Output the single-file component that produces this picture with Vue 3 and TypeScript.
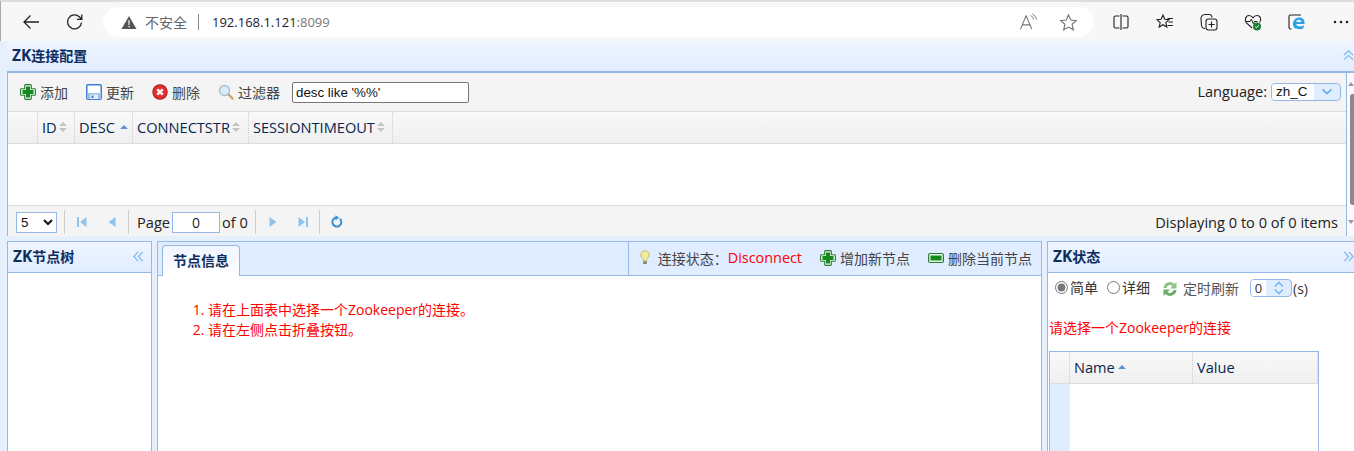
<script setup lang="ts">
const columns = [
  { label: 'ID', width: 37, active: false },
  { label: 'DESC', width: 58, active: true },
  { label: 'CONNECTSTR', width: 116, active: false },
  { label: 'SESSIONTIMEOUT', width: 144, active: false },
]
const tools = [
  { label: '添加', icon: 'add' },
  { label: '更新', icon: 'save' },
  { label: '删除', icon: 'del' },
  { label: '过滤器', icon: 'search' },
]
</script>

<template>
  <div class="page">
    <header class="chrome">
      <div class="nav">
        <svg class="navicon" viewBox="0 0 20 20"><path d="M18 10H3M9.500 3.500 3 10l6.500 6.500" fill="none" stroke="#222" stroke-width="1.300"/></svg>
        <svg class="navicon" viewBox="0 0 20 20"><path d="M16.500 10.500a7 7 0 1 1-2-5.500l2 2M16.800 2.500V7.300H12" fill="none" stroke="#222" stroke-width="1.300"/></svg>
      </div>
      <div class="address">
        <svg class="warn" viewBox="0 0 16 16"><path d="M8 1 16 15H0Z" fill="#555"/><path d="M7.300 5.500h1.400l-.2 5.200h-1zM7.300 11.700h1.400v1.400H7.300z" fill="#fff"/></svg>
        <span class="insecure">不安全</span>
        <span class="addr-sep"></span>
        <span class="host">192.168.1.121<span class="port">:8099</span></span>
        <span class="addr-spacer"></span>
        <svg class="addr-icon read" viewBox="0 0 20 20"><path d="M1.500 17 7.500 3l6 14M3.500 12.500h8" fill="none" stroke="#777" stroke-width="1.200"/><path d="M12 2.500c2 1 3 2.500 3.200 4.500M14 1c2.500 1.200 4 3.500 4.300 6" fill="none" stroke="#777" stroke-width="1"/></svg>
        <svg class="addr-icon star" viewBox="0 0 20 20"><path d="m10 2 2.400 5.400 5.800.6-4.400 3.900 1.300 5.800L10 14.800l-5.100 2.900 1.300-5.800L1.800 8l5.800-.6Z" fill="none" stroke="#777" stroke-width="1.200"/></svg>
      </div>
      <div class="browser-tools">
        <svg viewBox="0 0 18 18"><path d="M7.500 3H3.500A1.500 1.500 0 0 0 2 4.500v9A1.500 1.500 0 0 0 3.500 15h4M10.500 3h4A1.500 1.500 0 0 1 16 4.500v9a1.500 1.500 0 0 1-1.500 1.500h-4M9 1v16" fill="none" stroke="#222" stroke-width="1.100"/></svg>
        <svg viewBox="0 0 18 18"><path d="m7 2 1.800 4.300 4.200.4-3.200 2.900 1 4.400L7 11.700 3.200 14l1-4.400L1 6.700l4.200-.4Z" fill="none" stroke="#222" stroke-width="1.100"/><path d="M11.500 5.500H17M12.500 9H17M11.500 12.500H17" stroke="#222" stroke-width="1.100"/></svg>
        <svg viewBox="0 0 18 18"><rect x="6" y="6" width="11" height="11" rx="2.500" fill="none" stroke="#222" stroke-width="1.100"/><path d="M11.500 8.500v6M8.500 11.500h6" stroke="#222" stroke-width="1.100"/><path d="M5 15.500c-2 0-3.500-1.500-3.500-3.500L1 6a4 4 0 0 1 4-4.500h4a3 3 0 0 1 3 3" fill="none" stroke="#222" stroke-width="1.100"/></svg>
        <svg viewBox="0 0 18 18"><path d="M8 15 2.500 9.800C.2 7.300 1.500 2.500 5 2.500c1.800 0 3.200 1 4 2.300.8-1.300 2.200-2.300 4-2.300 3.500 0 4.800 4.300 2.700 7" fill="none" stroke="#222" stroke-width="1.100"/><path d="M1.500 8.500H6l1.300-2.300 2 4.500 1.200-2.200h3" fill="none" stroke="#222" stroke-width="1"/><circle cx="13" cy="13.500" r="4" fill="#1c7d32"/><path d="m11.200 13.500 1.300 1.300 2.200-2.500" fill="none" stroke="#fff" stroke-width="1"/></svg>
        <svg viewBox="0 0 18 18"><path d="M3.500 16H2.500A1.500 1.500 0 0 1 1 14.500v-11A1.500 1.500 0 0 1 2.500 2H13" fill="none" stroke="#222" stroke-width="1.100"/><path d="M5 11c0-4 3-6.500 6.500-6.500 3 0 5 2 5 5v1.500H8.200c.2 1.600 1.600 2.500 3.300 2.500 1.500 0 2.900-.4 4.200-1.200v2.600c-1.300.9-3 1.300-4.700 1.300C7.500 16.200 5 14.500 5 11Zm3.300-2h5c0-1.300-1-2.200-2.400-2.200-1.400 0-2.400.9-2.600 2.200Z" fill="#2aa3e6"/></svg>
        <svg viewBox="0 0 18 18"><circle cx="3" cy="9" r="1.300" fill="#222"/><circle cx="9" cy="9" r="1.300" fill="#222"/><circle cx="15" cy="9" r="1.300" fill="#222"/></svg>
      </div>
    </header>

    <main class="workspace">
      <section class="config">
        <div class="panel-title config-title">
          <span><span class="zk">ZK</span>连接配置</span>
          <svg class="chev" viewBox="0 0 12 12"><path d="M1 5.500 6 1l5 4.500M1 10.500 6 6l5 4.500" fill="none" stroke="#7ab8ee" stroke-width="1.300"/></svg>
        </div>
        <div class="config-body">
          <div class="config-main">
            <div class="toolbar">
              <div v-for="t in tools" :key="t.label" class="tool">
                <svg v-if="t.icon === 'add'" class="ico" viewBox="0 0 16 16"><path d="M5.500.6h5a.8.800 0 0 1 .8.800v3.300h3.300a.8.800 0 0 1 .8.800v5a.8.800 0 0 1-.8.800h-3.300v3.300a.8.800 0 0 1-.8.800h-5a.8.800 0 0 1-.8-.8v-3.300H1.400a.8.800 0 0 1-.8-.8v-5a.8.800 0 0 1 .8-.8h3.300V1.400a.8.800 0 0 1 .8-.8Z" fill="#eaf5e8" stroke="#2b7a36" stroke-width="1.100"/><path d="M6 2.500h4v3.500h3.500v4H10v3.500H6V10H2.500V6H6Z" fill="#128a1c"/></svg>
                <svg v-else-if="t.icon === 'save'" class="ico" viewBox="0 0 16 16"><rect x=".8" y=".8" width="14.400" height="14.400" rx="1" fill="#fff" stroke="#3f7fd6" stroke-width="1.500"/><path d="M1 9h14v6H1z" fill="#9dbfec"/><rect x="4" y="10.500" width="8" height="4.500" fill="#e6edf7"/><rect x="5.500" y="11.500" width="2" height="2.500" fill="#3f7fd6"/></svg>
                <svg v-else-if="t.icon === 'del'" class="ico" viewBox="0 0 16 16"><circle cx="8" cy="8" r="7.700" fill="#a81414"/><circle cx="8" cy="8" r="6.800" fill="#e43030"/><path d="m5.300 5.300 5.400 5.400M10.700 5.300l-5.400 5.400" stroke="#fff" stroke-width="2.400"/></svg>
                <svg v-else class="ico" viewBox="0 0 16 16"><path d="m10 10 4.500 4.500" stroke="#d0a060" stroke-width="2.400" stroke-linecap="round"/><circle cx="6.500" cy="6.500" r="5" fill="#d8ecfa" stroke="#a8bccb" stroke-width="1.300"/></svg>
                <span>{{ t.label }}</span>
              </div>
              <input class="filter" type="text" value="desc like '%%'" />
              <span class="spacer"></span>
              <span class="lang-label">Language:</span>
              <span class="lang-select">
                <span class="lang-value">zh_C</span>
                <span class="lang-arrow"><svg viewBox="0 0 12 8"><path d="m1.500 1.500 4.500 4 4.500-4" fill="none" stroke="#6fb4ea" stroke-width="1.800"/></svg></span>
              </span>
            </div>
            <div class="grid-head">
              <div class="row-cell"></div>
              <div v-for="c in columns" :key="c.label" class="col" :style="{ width: c.width + 'px' }">
                <span>{{ c.label }}</span>
                <span v-if="c.active" class="sort-up"></span>
                <span v-else class="sort-both"><i></i><b></b></span>
              </div>
            </div>
            <div class="grid-body"></div>
            <div class="pager">
              <select class="size"><option>5</option></select>
              <span class="psep first"></span>
              <svg class="pbtn" viewBox="0 0 16 16"><path d="M3 3h2v10H3zM12.500 3v10L6 8Z" fill="#8fc4ee"/></svg>
              <svg class="pbtn" viewBox="0 0 16 16"><path d="M11.500 3v10L4.500 8Z" fill="#8fc4ee"/></svg>
              <span class="psep"></span>
              <span class="ptext page-word">Page</span>
              <input class="page-input" type="text" value="0" />
              <span class="ptext">of 0</span>
              <span class="psep after-of"></span>
              <svg class="pbtn" viewBox="0 0 16 16"><path d="M4.500 3v10l7-5Z" fill="#8fc4ee"/></svg>
              <svg class="pbtn" viewBox="0 0 16 16"><path d="M11 3h2v10h-2zM3.500 3v10L10 8Z" fill="#8fc4ee"/></svg>
              <span class="psep"></span>
              <svg class="pbtn" viewBox="0 0 16 16"><path d="M11 4.800a4.500 4.500 0 1 1-3.500-1.300" fill="none" stroke="#3a8fd0" stroke-width="2"/><path d="M6.500 1.200v5l3.700-2.500Z" fill="#3a8fd0"/></svg>
              <span class="spacer"></span>
              <span class="ptext">Displaying 0 to 0 of 0 items</span>
            </div>
          </div>
          <div class="scrollbar">
            <span class="sb-up"></span>
            <span class="sb-thumb"></span>
            <span class="sb-down"></span>
          </div>
        </div>
      </section>

      <section class="lower">
        <aside class="west">
          <div class="panel-title side-title">
            <span><span class="zk">ZK</span>节点树</span>
            <svg class="chev" viewBox="0 0 12 12"><path d="M5.500 1 1 6l4.500 5M10.500 1 6 6l4.500 5" fill="none" stroke="#7ab8ee" stroke-width="1.300"/></svg>
          </div>
        </aside>
        <div class="center">
          <div class="tabs">
            <div class="tab">节点信息</div>
            <span class="spacer"></span>
            <div class="tab-tools">
              <svg class="bulb" viewBox="0 0 14 18"><path d="M7 1a5 5 0 0 0-3 9c.8.8 1 1.800 1 3h4c0-1.200.2-2.200 1-3A5 5 0 0 0 7 1Z" fill="#eeeb9a" stroke="#b9b56a"/><rect x="5" y="13.500" width="4" height="3" fill="#777"/></svg>
              <span class="status-label">连接状态：</span>
              <span class="status">Disconnect</span>
              <svg class="ico add-node" viewBox="0 0 16 16"><path d="M5.500.6h5a.8.800 0 0 1 .8.800v3.300h3.300a.8.800 0 0 1 .8.800v5a.8.800 0 0 1-.8.800h-3.300v3.300a.8.800 0 0 1-.8.800h-5a.8.800 0 0 1-.8-.8v-3.300H1.400a.8.800 0 0 1-.8-.8v-5a.8.800 0 0 1 .8-.8h3.300V1.400a.8.800 0 0 1 .8-.8Z" fill="#eaf5e8" stroke="#2b7a36" stroke-width="1.100"/><path d="M6 2.500h4v3.500h3.500v4H10v3.500H6V10H2.500V6H6Z" fill="#128a1c"/></svg>
              <span class="node-label">增加新节点</span>
              <svg class="ico del-node" viewBox="0 0 16 16"><rect x=".6" y="3.500" width="14.800" height="9" rx="1.500" fill="#eaf5e8" stroke="#2b7a36" stroke-width="1.200"/><rect x="2.500" y="5.500" width="11" height="5" fill="#128a1c"/></svg>
              <span class="node-label">删除当前节点</span>
            </div>
          </div>
          <ol class="hints">
            <li>请在上面表中选择一个Zookeeper的连接。</li>
            <li>请在左侧点击折叠按钮。</li>
          </ol>
        </div>
        <aside class="east">
          <div class="panel-title side-title">
            <span><span class="zk">ZK</span>状态</span>
            <svg class="chev" viewBox="0 0 12 12"><path d="M1.500 1 6 6l-4.500 5M6.500 1l4.500 5-4.500 5" fill="none" stroke="#7ab8ee" stroke-width="1.300"/></svg>
          </div>
          <div class="east-controls">
            <label class="radio"><input type="radio" name="mode" checked />简单</label>
            <label class="radio"><input type="radio" name="mode" />详细</label>
            <svg class="ico refresh" viewBox="0 0 16 16"><path d="M1.500 7a6.500 6.500 0 0 1 11-4L14.500 1v6.500h-6.500L10.500 5A3.700 3.700 0 0 0 4.500 7Z" fill="#8cc488"/><path d="M14.500 9a6.500 6.500 0 0 1-11 4l-2 2V8.500H8L5.500 11a3.700 3.700 0 0 0 6-2Z" fill="#6cae68"/></svg>
            <span class="refresh-label">定时刷新</span>
            <span class="spinner">
              <span class="spin-value">0</span>
              <span class="spin-arrows">
                <svg viewBox="0 0 12 14"><path d="m2 5.500 4-4 4 4M2 8.500l4 4 4-4" fill="none" stroke="#7ab8ee" stroke-width="1.600"/></svg>
              </span>
            </span>
            <span class="unit">(s)</span>
          </div>
          <p class="east-msg">请选择一个Zookeeper的连接</p>
          <div class="prop-grid">
            <div class="prop-head">
              <div class="prop-row"></div>
              <div class="prop-col name">Name<span class="sort-up"></span></div>
              <div class="prop-col value">Value</div>
            </div>
            <div class="prop-body"><div class="prop-gutter"></div></div>
          </div>
        </aside>
      </section>
    </main>
  </div>
</template>

<style>
html, body { margin: 0; overflow: hidden; background: #fff; }
</style>

<style scoped>
.page {
  width: 1354px; height: 451px; overflow: hidden; display: flex; flex-direction: column;
  font-family: "Open Sans", "Noto Sans CJK SC", sans-serif; font-size: 14px; color: #222;
  background: #e6f0fc;
}
.chrome {
  height: 41px; flex: none; box-sizing: border-box; display: flex; align-items: center;
  background: #f7f7f7; padding: 0 0 0 1px; border-top: 2px solid #ddd; border-left: 1px solid #aaa;
}
.nav { display: flex; gap: 24px; padding-left: 19px; width: 82px; flex: none; }
.navicon { width: 20px; height: 20px; }
.address {
  width: 991px; height: 30px; margin-top: 1px; background: #fff; border-radius: 15px; flex: none;
  display: flex; align-items: center; box-sizing: border-box; padding: 0 16px 0 18px;
}
.warn { width: 16px; height: 15px; margin-right: 8px; }
.insecure { color: #666; font-size: 14px; }
.addr-sep { width: 1px; height: 16px; background: #888; margin: 0 13px 0 11px; }
.host { font-size: 13px; color: #1a1a2e; }
.port { color: #777; }
.addr-spacer, .spacer { flex: 1; }
.addr-icon { width: 19px; height: 19px; }
.read { margin-right: 21px; }
.browser-tools { flex: 1; display: flex; align-items: center; gap: 26px; padding-left: 18px; }
.browser-tools svg { width: 18px; height: 18px; flex: none; }

.workspace { flex: 1; min-height: 0; padding-left: 7px; display: flex; flex-direction: column; }
.config { display: flex; flex-direction: column; height: 195px; flex: none; }
.panel-title {
  display: flex; align-items: center; justify-content: space-between; box-sizing: border-box;
  font-weight: 700; color: #0e2d5f; font-size: 14px; background: linear-gradient(#eff5ff, #e0ecff);
}
.zk { font-size: 15.500px; }
.config-title { height: 32px; border-bottom: 2px solid #95b8e7; padding: 0 0 2px 5px; border-radius: 4px 0 0 0; }
.chev { width: 11px; height: 11px; flex: none; }
.config-body { flex: 1; min-height: 0; display: flex; }
.config-main { width: 1340px; flex: none; display: flex; flex-direction: column; border-left: 1px solid #95b8e7; box-sizing: border-box; border-right: 1px solid #95b8e7; }
.toolbar {
  height: 39px; flex: none; box-sizing: border-box; display: flex; align-items: center; background: #f4f4f4;
  border-bottom: 1px solid #ddd; padding: 0 5px 0 12px; font-size: 14px; color: #444;
}
.tool { display: flex; align-items: center; gap: 4px; margin-right: 18px; }
.tool:nth-child(4) { margin-right: 12px; }
.ico { width: 16px; height: 16px; flex: none; }
.filter {
  width: 177px; height: 21px; box-sizing: border-box; border: 1px solid #767676; border-radius: 2px; padding: 0 3px;
  font: 13.330px "Liberation Sans", sans-serif; color: #111; background: #fff; outline: none;
}
.lang-label { font-size: 14.600px; color: #222; margin: 0 4px 2px 0; }
.lang-select {
  width: 70px; height: 18px; box-sizing: border-box; border: 1px solid #95b8e7; border-radius: 4px; display: flex; overflow: hidden; background: #e0ecff;
}
.lang-value { width: 42px; background: #fff; font: 13.500px/16px "Liberation Sans", sans-serif; padding-left: 4px; box-sizing: border-box; color: #111; }
.lang-arrow { flex: 1; display: flex; align-items: center; justify-content: center; }
.lang-arrow svg { width: 12px; height: 8px; }
.grid-head {
  height: 32px; flex: none; box-sizing: border-box; display: flex; background: linear-gradient(#f9f9f9, #efefef);
  border-bottom: 1px solid #ddd; font-size: 14.600px; color: #0a2550;
}
.row-cell { width: 30px; flex: none; box-sizing: border-box; border-right: 1px dotted #ccc; }
.col { flex: none; box-sizing: border-box; display: flex; align-items: center; gap: 2px; padding: 0 0 2px 4px; border-right: 1px dotted #ccc; }
.sort-up { display: inline-block; width: 0; height: 0; border: 4px solid transparent; border-top: 0; border-bottom: 4px solid #5a94d0; margin-left: 3px; }
.sort-both { display: inline-flex; flex-direction: column; gap: 2px; }
.sort-both i, .sort-both b { display: block; width: 0; height: 0; border: 4px solid transparent; }
.sort-both i { border-top: 0; border-bottom: 4px solid #c4c4c4; }
.sort-both b { border-bottom: 0; border-top: 4px solid #c4c4c4; }
.grid-body { height: 61px; flex: none; background: #fff; }
.pager {
  flex: 1; min-height: 0; display: flex; align-items: center; box-sizing: border-box; background: #f4f4f4; border-top: 1px solid #ddd; padding: 2px 8px 0 8px; font-size: 14.600px;
}
.size { width: 41px; height: 21px; font: 13.330px "Liberation Sans", sans-serif; border: 1px solid #95b8e7; background: #fff; color: #111; flex: none; }
.psep { width: 1px; height: 24px; background: #ccc; margin: 0 2px 0 1px; flex: none; }
.psep.first { margin-left: 7px; }
.psep.after-of { margin-left: 7px; }
.pbtn { width: 16px; height: 16px; margin: 0 7px; flex: none; }
.page-word { margin-left: 6px; }
.ptext { color: #222; }
.page-input { width: 48px; height: 21px; box-sizing: border-box; border: 1px solid #95b8e7; text-align: center; font: 14px "Open Sans", sans-serif; margin: 0 2px; background: #fff; color: #222; }
.scrollbar { width: 7px; flex: none; background: #fafafa; display: flex; flex-direction: column; align-items: flex-end; }
.sb-up { width: 0; height: 0; border: 3px solid transparent; border-top: 0; border-bottom: 4px solid #999; margin: 9px 0 0; }
.sb-thumb { flex: 1; width: 4px; background: #8a8a8a; border-radius: 3px 0 0 3px; margin: 8px 0 15px; }
.sb-down { width: 0; height: 0; border: 3px solid transparent; border-bottom: 0; border-top: 4px solid #999; margin: 0 0 12px; }
.lower { flex: 1; min-height: 0; display: flex; gap: 5px; padding-top: 5px; }
.west, .center, .east { background: #fff; box-sizing: border-box; border: 1px solid #95b8e7; border-bottom: 0; flex: none; }
.west { width: 145px; }
.center { width: 885px; }
.east { flex: 1; min-width: 0; border-right: 0; }
.side-title { height: 31px; border-bottom: 1px solid #95b8e7; padding: 0 7px 2px 5px; }
.east .side-title { padding-right: 0; }
.tabs { height: 34px; box-sizing: border-box; background: #e0ecff; border-bottom: 1px solid #95b8e7; display: flex; align-items: flex-end; padding-left: 4px; }
.tab {
  width: 78px; height: 31px; margin-bottom: -1px; box-sizing: border-box; border: 1px solid #95b8e7; border-bottom: 0; border-radius: 4px 4px 0 0;
  background: linear-gradient(#eff5ff, #fff); font-weight: 700; font-size: 14px; color: #0e2d5f; text-align: center; line-height: 30px;
}
.tab-tools { height: 33px; box-sizing: border-box; border-left: 1px solid #95b8e7; display: flex; align-items: center; padding: 0 9px 2px 10px; font-size: 14px; color: #444; }
.bulb { width: 12px; height: 17px; margin-right: 7px; flex: none; }
.status { color: #f00; font-size: 14.400px; margin-right: 18px; }
.add-node, .del-node { margin-right: 4px; }
.node-label + .del-node { margin-left: 18px; }
.hints { margin: 0; padding: 24px 0 0 50px; color: #f00; font-size: 14px; }
.hints li { height: 20px; line-height: 20px; }
.east-controls { display: flex; align-items: center; height: 30px; padding-left: 7px; font-size: 14px; color: #333; }
.radio { display: flex; align-items: center; gap: 2px; margin: 0 9px 2px 0; }
.radio input { margin: 0; width: 13px; height: 13px; accent-color: #777; }
.refresh { margin: 1px 5px 0 3px; }
.refresh-label { color: #555; margin-right: 11px; }
.spinner { width: 42px; height: 18px; box-sizing: border-box; border: 1px solid #95b8e7; border-radius: 4px; display: flex; overflow: hidden; background: #e0ecff; }
.spin-value { width: 15px; background: #fff; text-align: center; font-size: 13px; line-height: 16px; }
.spin-arrows { flex: 1; display: flex; justify-content: center; align-items: center; }
.spin-arrows svg { width: 12px; height: 14px; }
.unit { font-size: 14px; margin-left: 1px; }
.east-msg { margin: 15px 0 0 1px; color: #f00; font-size: 14px; line-height: 20px; }
.prop-grid { width: 270px; margin: 13px 0 0 1px; box-sizing: border-box; border: 1px solid #95b8e7; border-bottom: 0; }
.prop-head { height: 32px; box-sizing: border-box; display: flex; background: linear-gradient(#f9f9f9, #efefef); border-bottom: 1px solid #ddd; font-size: 14.600px; color: #0a2550; }
.prop-row { width: 20px; flex: none; box-sizing: border-box; border-right: 1px dotted #ccc; }
.prop-col { display: flex; align-items: center; padding: 0 0 2px 4px; box-sizing: border-box; border-right: 1px dotted #ccc; }
.name { width: 123px; }
.value { flex: 1; }
.prop-body { height: 80px; }
.prop-gutter { width: 20px; height: 100%; background: #e0ecff; }
</style>
